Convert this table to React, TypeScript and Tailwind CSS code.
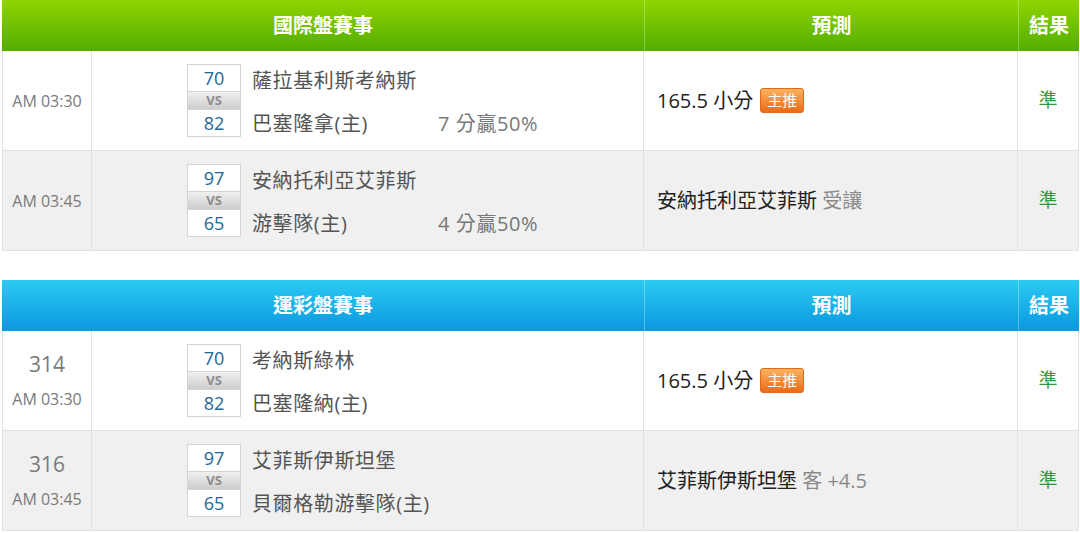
import React from "react";

type Row = {
  no?: string;
  time: string;
  home: string;
  away: string;
  s1: string;
  s2: string;
  spread?: string;
  pick: React.ReactNode;
  result: string;
};

const font = { fontFamily: '"Open Sans", "Noto Sans CJK TC", sans-serif' };

const Badge = () => (
  <span className="ml-[7px] inline-flex h-[25px] w-[44px] items-center justify-center rounded-[3px] border border-[#e0691a] bg-gradient-to-b from-[#fbb15c] to-[#ea6a10] text-[15px] leading-none text-white">
    主推
  </span>
);

const intl: Row[] = [
  {
    time: "AM 03:30",
    s1: "70",
    s2: "82",
    home: "薩拉基利斯考納斯",
    away: "巴塞隆拿(主)",
    spread: "7 分贏50%",
    pick: (
      <span className="flex items-center">
        165.5 小分
        <Badge />
      </span>
    ),
    result: "準",
  },
  {
    time: "AM 03:45",
    s1: "97",
    s2: "65",
    home: "安納托利亞艾菲斯",
    away: "游擊隊(主)",
    spread: "4 分贏50%",
    pick: (
      <span>
        安納托利亞艾菲斯 <span className="text-[#8a8a8a]">受讓</span>
      </span>
    ),
    result: "準",
  },
];

const lottery: Row[] = [
  {
    no: "314",
    time: "AM 03:30",
    s1: "70",
    s2: "82",
    home: "考納斯綠林",
    away: "巴塞隆納(主)",
    pick: (
      <span className="flex items-center">
        165.5 小分
        <Badge />
      </span>
    ),
    result: "準",
  },
  {
    no: "316",
    time: "AM 03:45",
    s1: "97",
    s2: "65",
    home: "艾菲斯伊斯坦堡",
    away: "貝爾格勒游擊隊(主)",
    pick: (
      <span>
        艾菲斯伊斯坦堡 <span className="text-[#8a8a8a]">客 +4.5</span>
      </span>
    ),
    result: "準",
  },
];

const ScoreBox = ({ a, b }: { a: string; b: string }) => (
  <div className="flex w-[54px] flex-col">
    <div className="flex h-[28px] items-center justify-center border border-[#d4d4d4] bg-white text-[18px] text-[#1d6796]">
      {a}
    </div>
    <div className="flex h-[17px] items-center justify-center border-x border-[#d4d4d4] bg-gradient-to-b from-[#f0f0f0] to-[#cdcdcd] text-[13px] font-bold leading-none text-[#8c8c8c]">
      VS
    </div>
    <div className="flex h-[28px] items-center justify-center border border-[#d4d4d4] bg-white text-[18px] text-[#1d6796]">
      {b}
    </div>
  </div>
);

const Table = ({
  title,
  rows,
  head,
}: {
  title: string;
  rows: Row[];
  head: string;
}) => (
  <div className="ml-[2px] w-[1077px]">
    {/* Header */}
    <div
      className={`grid h-[51px] grid-cols-[642px_374px_61px] bg-gradient-to-b text-[20px] font-bold text-white ${head}`}
    >
      <div className="flex items-center justify-center">{title}</div>
      <div className="flex items-center justify-center border-l border-white/30">預測</div>
      <div className="flex items-center justify-center border-l border-white/30">結果</div>
    </div>

    {/* Rows */}
    {rows.map((r, i) => (
      <div
        key={i}
        className={`grid h-[100px] grid-cols-[90px_552px_374px_61px] border-b border-[#e2e2e2] ${
          i % 2 === 1 ? "bg-[#f0f0f0]" : "bg-white"
        }`}
      >
        <div className="flex flex-col items-center justify-center gap-[16px] border-l border-r border-[#e2e2e2] text-[#7a7a7a]">
          {r.no && <div className="text-[21px] leading-none">{r.no}</div>}
          <div className="text-[16px] leading-none">{r.time}</div>
        </div>
        <div className="flex items-center border-r border-[#e2e2e2] pl-[95px]">
          <ScoreBox a={r.s1} b={r.s2} />
          <div className="ml-[11px] flex h-[73px] flex-col justify-between text-[20px] leading-[26px] tracking-[0.6px] text-[#555]">
            <div className="mt-[4px]">{r.home}</div>
            <div className="flex">
              <span className="w-[186px]">{r.away}</span>
              {r.spread && <span className="text-[#777]">{r.spread}</span>}
            </div>
          </div>
        </div>
        <div className="flex items-center border-r border-[#e2e2e2] pl-[13px] text-[20px] text-[#222]">
          {r.pick}
        </div>
        <div className="flex items-center justify-center border-r border-[#e2e2e2] text-[19px] text-[#2f9a3d]">
          {r.result}
        </div>
      </div>
    ))}
  </div>
);

export default function App() {
  return (
    <div className="h-[533px] w-[1080px] overflow-hidden bg-white" style={font}>
      <Table title="國際盤賽事" rows={intl} head="from-[#8fd400] to-[#52ad00]" />
      <div className="h-[29px]" />
      <Table title="運彩盤賽事" rows={lottery} head="from-[#2bcbf2] to-[#0a97df]" />
    </div>
  );
}
